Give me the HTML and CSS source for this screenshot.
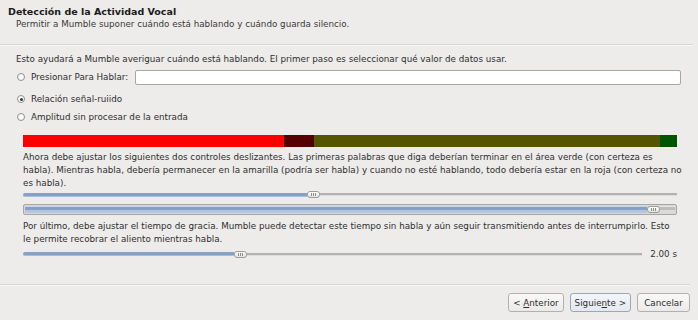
FILE: index.html
```html
<!DOCTYPE html>
<html>
<head>
<meta charset="utf-8">
<link rel="stylesheet" href="styles.css">
</head>
<body>
<div class="wizard">
  <header class="head">
    <div class="title">Detección de la Actividad Vocal</div>
    <div class="subtitle">Permitir a Mumble suponer cuándo está hablando y cuándo guarda silencio.</div>
  </header>
  <div class="sep"></div>
  <main class="body">
    <p class="intro">Esto ayudará a Mumble averiguar cuándo está hablando. El primer paso es seleccionar qué valor de datos usar.</p>
    <div class="radios">
      <label class="radio-row first"><span class="radio"></span><span>Presionar Para Hablar:</span><span class="input"></span></label>
      <label class="radio-row second"><span class="radio checked"></span><span>Relación señal-ruiido</span></label>
      <label class="radio-row"><span class="radio"></span><span>Amplitud sin procesar de la entrada</span></label>
    </div>
    <div class="inner">
      <div class="meter">
        <div class="seg red" style="width:261px"></div>
        <div class="seg dred" style="width:30px"></div>
        <div class="seg olive" style="flex:1"></div>
        <div class="seg green" style="width:17px"></div>
      </div>
      <p class="para p2">Ahora debe ajustar los siguientes dos controles deslizantes. Las primeras palabras que diga deberían terminar en el área verde (con certeza es habla). Mientras habla, debería permanecer en la amarilla (podría ser habla) y cuando no esté hablando, todo debería estar en la roja (con certeza no es habla).</p>
      <div class="slider s1">
        <div class="fill" style="width:284px"></div>
        <div class="handle"><i></i><i></i><i></i></div>
        <div class="rest"></div>
      </div>
      <div class="trough">
        <div class="tfill" style="width:622px"></div>
        <div class="handle"><i></i><i></i><i></i></div>
        <div class="trest"></div>
      </div>
      <p class="para p3">Por último, debe ajustar el tiempo de gracia. Mumble puede detectar este tiempo sin habla y aún seguir transmitiendo antes de interrumpirlo. Esto le permite recobrar el aliento mientras habla.</p>
      <div class="slider-row">
        <div class="slider s3">
          <div class="fill" style="width:211px"></div>
          <div class="handle"><i></i><i></i><i></i></div>
          <div class="rest"></div>
        </div>
        <span class="val">2.00 s</span>
      </div>
    </div>
  </main>
  <div class="sep bottom"></div>
  <footer class="buttons">
    <button class="btn">&lt; <u>A</u>nterior</button>
    <button class="btn focus">Siguie<u>n</u>te &gt;</button>
    <button class="btn">Cancelar</button>
  </footer>
</div>
</body>
</html>
```

FILE: styles.css
```css
html, body {
  margin: 0;
  padding: 0;
  background: #edecea;
}
body {
  width: 698px;
  height: 320px;
  overflow: hidden;
  font-family: "DejaVu Sans", sans-serif;
  font-size: 8.75px;
  color: #2e2e2e;
}
.wizard {
  display: flex;
  flex-direction: column;
  height: 320px;
}
.head {
  padding: 5px 0 0 8px;
  height: 37px;
  box-sizing: border-box;
}
.title {
  font-weight: bold;
  font-size: 9.5px;
  color: #1a1a1a;
  line-height: 13px;
}
.subtitle {
  padding-left: 8px;
  line-height: 12px;
  color: #3a3a3a;
}
.sep {
  height: 1px;
  background: #d6d5d3;
  border-bottom: 1px solid #f8f8f7;
  margin: 7px 5px 0 0;
}
.body {
  padding: 0 0 0 16px;
  flex: 1;
}
p { margin: 0; }
.intro {
  margin-top: 7px;
  line-height: 13px;
}
.radios {
  display: flex;
  flex-direction: column;
}
.radio-row {
  display: flex;
  align-items: center;
  height: 18px;
  gap: 6px;
  padding-left: 1px;
}
.radio-row.first { height: 22px; }
.radio-row.second { margin-top: 2px; }
.radio {
  width: 8px;
  height: 8px;
  border-radius: 50%;
  border: 1px solid #8f8f8f;
  background: #fbfbfa;
  box-sizing: border-box;
  position: relative;
}
.radio.checked::after {
  content: "";
  position: absolute;
  left: 1.5px;
  top: 1.5px;
  width: 3px;
  height: 3px;
  border-radius: 50%;
  background: #333;
}
.input {
  margin-left: 1px;
  width: 546px;
  height: 15px;
  box-sizing: border-box;
  border: 1px solid #a8a7a5;
  border-radius: 2px;
  background: #fff;
}
.inner {
  padding-left: 7px;
  width: 654px;
}
.meter {
  display: flex;
  height: 12px;
  margin-top: 9px;
}
.red { background: #ff0000; }
.dred { background: #550000; }
.olive { background: #555500; }
.green { background: #005500; }
.para {
  line-height: 13px;
  margin-top: 4px;
}
.p2 { margin-right: -5px; }
.slider {
  position: relative;
  display: flex;
  align-items: center;
  height: 9px;
  margin-top: 0;
}
.fill {
  height: 3px;
  background: #86a1c6;
  border-bottom: 1px solid #a9bdd8;
  border-radius: 2px 0 0 2px;
}
.rest {
  flex: 1;
  height: 2px;
  background: #b3b2b0;
  border-bottom: 1px solid #dedddb;
}
.handle {
  width: 13px;
  height: 7px;
  box-sizing: border-box;
  border: 1px solid #9e9d9b;
  border-radius: 3px;
  background: linear-gradient(#ffffff, #e3e2e0);
  display: flex;
  justify-content: center;
  align-items: center;
  gap: 1px;
  flex: none;
}
.handle i {
  width: 1px;
  height: 3px;
  background: #8a8a8a;
}
.trough {
  display: flex;
  align-items: center;
  height: 11px;
  margin-top: 5px;
  border: 1px solid #a7a6a4;
  border-radius: 2px;
  box-sizing: border-box;
  background: #d9d8d6;
  padding: 0 1px;
}
.tfill {
  height: 7px;
  background: linear-gradient(#c5d4e8 0, #c5d4e8 1px, #86a1c6 1px, #86a1c6 4px, #b4c6de 4px);
}
.trest {
  flex: 1;
  height: 7px;
  background: linear-gradient(#e6e5e3 0, #e6e5e3 1px, #bdbcba 1px, #bdbcba 4px, #dcdbd9 4px);
}
.p3 { margin-top: 5px; }
.slider-row {
  display: flex;
  align-items: center;
  gap: 8px;
  margin-top: 3px;
}
.slider.s3 { flex: 1; }
.val { color: #333; }
.sep.bottom {
  margin: 0 8px 0 0;
}
.buttons {
  display: flex;
  justify-content: flex-end;
  gap: 6px;
  padding: 7px 8px 8px 0;
}
.btn {
  font-family: "DejaVu Sans", sans-serif;
  font-size: 8.75px;
  color: #2e2e2e;
  height: 19px;
  padding: 0 4px;
  border: 1px solid #b2b1af;
  border-radius: 3px;
  background: linear-gradient(#f9f9f8, #ebeae8);
  min-width: 53px;
}
.btn.focus {
  border-color: #97a8bd;
  background: linear-gradient(#f3f6fa, #e4e9f0);
}
.btn u { text-decoration: underline; }
```
